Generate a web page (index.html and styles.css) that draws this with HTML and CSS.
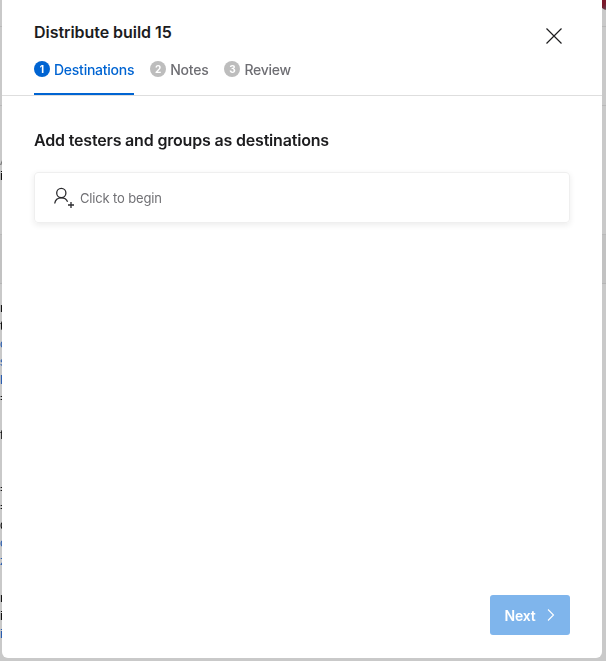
FILE: index.html
```html
<!DOCTYPE html>
<html lang="en">

<head>
  <meta charset="UTF-8">
  <meta name="viewport" content="width=device-width, initial-scale=1.0">
  <title>Distribute build 15</title>
  <link rel="stylesheet" href="styles.css">
</head>

<body>
  <!-- page behind the dialog, only the very edges show -->
  <div class="page">
    <div class="page-nav"><span class="avatar"></span></div>
    <div class="page-tabs"></div>
    <div class="page-intro">
      <span class="intro-a">A</span>
      <span class="intro-i">i</span>
    </div>
    <div class="page-band"></div>
    <div class="page-text">
      <div>n</div>
      <div>t</div>
      <div class="link">c</div>
      <div class="link">s</div>
      <div class="link">l</div>
      <div>=</div>
      <div>&nbsp;</div>
      <div>f</div>
      <div>&nbsp;</div>
      <div>&nbsp;</div>
      <div>=</div>
      <div>=</div>
      <div>d</div>
      <div class="link">c</div>
      <div class="link">z</div>
      <div>&nbsp;</div>
      <div>r</div>
      <div>i</div>
      <div class="link">i</div>
    </div>
  </div>

  <div class="modal">
    <header class="modal-header">
      <div class="modal-title-row">
        <h1>Distribute build 15</h1>
        <button class="close" aria-label="Close">
          <svg width="16" height="16" viewBox="0 0 16 16" fill="none" stroke="#1c1c1e" stroke-width="1.2">
            <path d="M.5.5l15 15M15.500.5l-15 15" />
          </svg>
        </button>
      </div>
      <nav class="steps">
        <a class="step active"><span class="step-num">1</span>Destinations</a>
        <a class="step"><span class="step-num">2</span>Notes</a>
        <a class="step"><span class="step-num">3</span>Review</a>
      </nav>
    </header>

    <main class="modal-body">
      <h2>Add testers and groups as destinations</h2>
      <div class="picker">
        <svg width="21" height="21" viewBox="0 0 21 21" fill="none" stroke="#2b2b2e" stroke-width="1.3">
          <circle cx="7.300" cy="6" r="4.600" />
          <path d="M.7 16.500c.5-3.600 3-5.700 6.600-5.700 3 0 5.300 1.400 6.300 3.900" />
          <path d="M14 18h6M17 15v6" />
        </svg>
        <span>Click to begin</span>
      </div>
    </main>

    <footer class="modal-footer">
      <button class="next" disabled>
        Next
        <svg width="8" height="12" viewBox="0 0 8 12" fill="none" stroke="#fff" stroke-width="1.1">
          <path d="M1 .5L6.500 6 1 11.500" />
        </svg>
      </button>
    </footer>
  </div>
</body>

</html>
```
FILE: styles.css
```css
* {
  box-sizing: border-box;
}

body {
  position: relative;
  height: 661px;
  margin: 0;
  font-family: Inter, "Noto Sans", sans-serif;
  background: #c9c9c9;
  overflow: hidden;
}

/* page behind the dialog */
.page {
  will-change: transform;
}

.page-nav {
  position: relative;
  height: 27px;
  border-bottom: 1px solid #b9b9b9;
}

.avatar {
  position: absolute;
  top: -4px;
  left: 600px;
  width: 14px;
  height: 14px;
  border-radius: 50%;
  background: linear-gradient(135deg, #7a1a2c 45%, #3f7f86);
}

.page-tabs {
  height: 79px;
  border-bottom: 1px solid #b9b9b9;
}

.page-intro {
  display: flex;
  flex-direction: column;
  height: 129px;
  padding-top: 47px;
  border-bottom: 1px solid #b9b9b9;
  font-family: "Liberation Sans", sans-serif;
  font-size: 13px;
  line-height: 15px;
}

.intro-a {
  color: #777;
}

.intro-i {
  color: #111;
}

.page-band {
  height: 49px;
  background: #c2c2c2;
  border-bottom: 1px solid #b5b5b5;
}

.page-text {
  padding-top: 15px;
  font-family: "Liberation Sans", sans-serif;
  font-size: 13px;
  line-height: 18.1px;
  color: #111;
}

.link {
  color: #2a5db0;
}

/* dialog */
.modal {
  position: absolute;
  top: 0;
  left: 2px;
  right: 4px;
  bottom: 3px;
  display: flex;
  flex-direction: column;
  background: #fff;
  border-radius: 0 0 6px 6px;
}

.modal-header {
  padding: 0 32px;
  border-bottom: 1px solid #dedede;
}

.modal-title-row {
  display: flex;
  justify-content: space-between;
  align-items: flex-start;
  padding-top: 22px;
}

h1 {
  margin: 0;
  font-size: 16px;
  line-height: 20px;
  font-weight: 600;
  letter-spacing: -0.05px;
  color: #1c1c1e;
}

.close {
  margin: 6px 8px 0 0;
  padding: 0;
  border: none;
  background: none;
  cursor: pointer;
}

.steps {
  display: flex;
  gap: 16px;
  margin-top: 4px;
}

.step {
  display: flex;
  align-items: center;
  gap: 4px;
  height: 44px;
  padding-bottom: 6px;
  font-size: 14px;
  font-weight: 500;
  letter-spacing: -0.25px;
  color: #6e6e73;
  border-bottom: 2px solid transparent;
}

.step-num {
  display: flex;
  align-items: center;
  justify-content: center;
  width: 16px;
  height: 16px;
  border-radius: 50%;
  background: #bdbdbd;
  color: #fff;
  font-size: 10px;
  font-weight: 700;
  letter-spacing: 0;
}

.step.active {
  margin-bottom: -1px;
  color: #0064d2;
  border-bottom-color: #0064d2;
}

.step.active .step-num {
  background: #0064d2;
}

.modal-body {
  flex: 1;
  padding: 34px 32px 0;
}

h2 {
  margin: 0;
  font-size: 16px;
  line-height: 20px;
  font-weight: 600;
  letter-spacing: -0.18px;
  color: #1c1c1e;
}

.picker {
  display: flex;
  align-items: center;
  gap: 5px;
  height: 51px;
  margin-top: 22px;
  padding: 0 19px;
  border: 1px solid #efefef;
  border-radius: 4px;
  box-shadow: 0 2px 6px rgba(0, 0, 0, 0.08);
  font-size: 13px;
  letter-spacing: -0.15px;
  color: #707074;
}

.modal-footer {
  display: flex;
  justify-content: flex-end;
  padding: 0 32px 23px;
}

.next {
  display: flex;
  align-items: center;
  justify-content: center;
  gap: 12px;
  width: 80px;
  height: 40px;
  border: none;
  border-radius: 3px;
  background: #7fb5ec;
  color: #fff;
  font-family: inherit;
  font-size: 14px;
  font-weight: 600;
  letter-spacing: -0.2px;
}
```
